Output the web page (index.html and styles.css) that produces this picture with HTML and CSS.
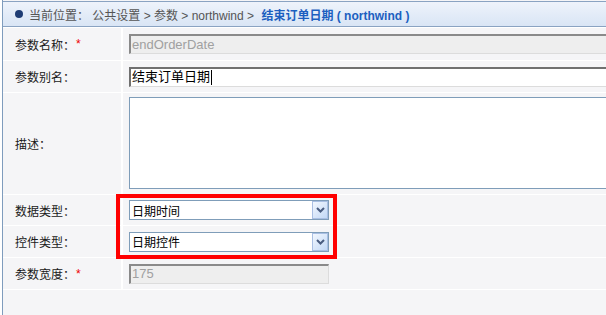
FILE: index.html
```html
<!DOCTYPE html>
<html>
<head>
<meta charset="utf-8">
<link rel="stylesheet" href="styles.css">
</head>
<body>
<div class="frame">
  <div class="crumb">
    <span class="dot"></span>
    <span class="path">当前位置： 公共设置 &gt; 参数 &gt; northwind &gt; </span><span class="here">结束订单日期 ( northwind )</span>
  </div>
  <div class="form">
    <div class="lab">参数名称：<span class="req">*</span></div>
    <div class="val"><div class="inp dis wide">endOrderDate</div></div>

    <div class="lab">参数别名：</div>
    <div class="val"><div class="inp wide">结束订单日期<span class="caret"></span></div></div>

    <div class="lab">描述：</div>
    <div class="val top"><div class="area"></div></div>

    <div class="lab">数据类型：</div>
    <div class="val"><div class="sel"><span class="seltext">日期时间</span><span class="btn"><svg width="9" height="6" viewBox="0 0 9 6"><path d="M1 1 L4.5 4.5 L8 1" fill="none" stroke="#4a5d80" stroke-width="2"/></svg></span></div></div>

    <div class="lab">控件类型：</div>
    <div class="val"><div class="sel"><span class="seltext">日期控件</span><span class="btn"><svg width="9" height="6" viewBox="0 0 9 6"><path d="M1 1 L4.5 4.5 L8 1" fill="none" stroke="#4a5d80" stroke-width="2"/></svg></span></div></div>

    <div class="lab">参数宽度：<span class="req">*</span></div>
    <div class="val"><div class="inp dis short">175</div></div>

    <div class="mark"></div>
  </div>
</div>
</body>
</html>
```

FILE: styles.css
```css
html, body {
  margin: 0;
  padding: 0;
  background: #ffffff;
}
body {
  width: 606px;
  height: 315px;
  overflow: hidden;
  font-family: "Liberation Sans", "Noto Sans CJK SC", sans-serif;
  font-size: 12px;
  color: #222;
}
.frame {
  margin-left: 2px;
  border-left: 1px solid #7f9cbd;
  height: 315px;
  background: #f5f5f7;
  overflow: hidden;
}
.crumb {
  margin-top: 1px;
  height: 24px;
  border-top: 1px solid #8aa3c2;
  border-bottom: 1px solid #8aa3c2;
  background: linear-gradient(#eef3fb, #d9e5f5);
  display: flex;
  align-items: center;
  white-space: nowrap;
  color: #555;
  font-size: 12px;
}
.dot {
  width: 8px;
  height: 8px;
  border-radius: 50%;
  background: #1f3d74;
  margin-left: 12px;
  margin-right: 6px;
}
.path {
  white-space: pre;
}
.here {
  color: #1c5fc0;
  font-weight: bold;
  margin-left: 4px;
}
.form {
  position: relative;
  display: grid;
  grid-template-columns: 118px 1fr;
  grid-template-rows: 32px 31px 101px 30px 31px 31px;
  gap: 1px 2px;
  background: #ffffff;
  border-bottom: 1px solid #ffffff;
  border-top: 1px solid #ffffff;
}
.lab {
  background: #f5f5f7;
  display: flex;
  align-items: center;
  padding-left: 12px;
  white-space: nowrap;
  color: #1a1a1a;
}
.req {
  color: #e00;
  margin-left: 1px;
}
.val {
  background: #f5f5f7;
  display: flex;
  align-items: center;
  padding-left: 6px;
  min-width: 0;
}
.val.top {
  align-items: flex-start;
  padding-top: 4px;
}
.inp {
  box-sizing: border-box;
  height: 20px;
  background: #fff;
  border: 1px solid #dcdcdc;
  border-top: 2px solid #707070;
  border-left: 2px solid #707070;
  font-size: 13px;
  line-height: 16px;
  padding-left: 1px;
  color: #000;
  white-space: nowrap;
  display: flex;
  align-items: center;
  flex: none;
}
.inp.wide {
  width: 560px;
}
.inp.short {
  width: 200px;
}
.inp.dis {
  background: #eeeeee;
  color: #a0a0a0;
  border-top-color: #8a8a8a;
  border-left-color: #8a8a8a;
}
.caret {
  display: inline-block;
  width: 0;
  height: 15px;
  border-left: 1px solid #000;
  margin-left: 1px;
}
.area {
  box-sizing: border-box;
  width: 560px;
  height: 92px;
  background: #fff;
  border: 1px solid #7f9db9;
  flex: none;
}
.sel {
  box-sizing: border-box;
  width: 200px;
  height: 20px;
  background: #fff;
  border: 1px solid #7f9db9;
  display: flex;
  align-items: center;
  flex: none;
}
.seltext {
  flex: 1;
  padding-left: 2px;
  color: #000;
  font-size: 12px;
}
.btn {
  box-sizing: border-box;
  width: 16px;
  height: 18px;
  border: 1px solid #a9bfe3;
  background: linear-gradient(135deg, #f2f7fe, #c3d9f6);
  display: flex;
  align-items: center;
  justify-content: center;
}
.mark {
  position: absolute;
  left: 113px;
  top: 166px;
  width: 213px;
  height: 57px;
  border: 4px solid #f00;
  pointer-events: none;
}
```
